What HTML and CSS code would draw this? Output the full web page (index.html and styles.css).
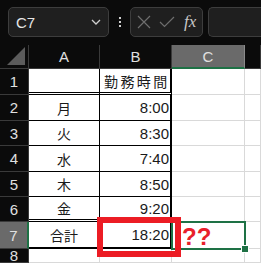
FILE: index.html
```html
<!DOCTYPE html>
<html>
<head>
    <meta charset="UTF-8">
    <title>勤務時間</title>
    <link rel="stylesheet" href="styles.css">
</head>
<body>
    <div class="toolbar">
        <div class="namebox">
            <span class="ref">C7</span>
            <svg class="chev" width="10" height="6" viewBox="0 0 10 6"><path d="M1 1 L5 5 L9 1" fill="none" stroke="#cfcfcf" stroke-width="1.3"/></svg>
        </div>
        <div class="dots"><i></i><i></i><i></i></div>
        <div class="fbtns">
            <svg width="14" height="14" viewBox="0 0 14 14"><path d="M1 1 L13 13 M13 1 L1 13" stroke="#6e6e6e" stroke-width="1.2"/></svg>
            <svg width="16" height="12" viewBox="0 0 16 12"><path d="M1 6 L5.5 10.5 L15 1" fill="none" stroke="#6e6e6e" stroke-width="1.2"/></svg>
            <span class="fx">fx</span>
        </div>
        <div class="formula"></div>
    </div>

    <div class="sheet">
        <div class="grid">
            <div class="corner"><span class="tri"></span></div>
            <div class="colh">A</div>
            <div class="colh">B</div>
            <div class="colh sel">C</div>
            <div class="colh"></div>

            <div class="rowh">1</div>
            <div class="c t a r1"></div>
            <div class="c t b r1 head">勤務時間</div>
            <div class="c"></div>
            <div class="c"></div>

            <div class="rowh">2</div>
            <div class="c t a">月</div>
            <div class="c t b num">8:00</div>
            <div class="c"></div>
            <div class="c"></div>

            <div class="rowh">3</div>
            <div class="c t a">火</div>
            <div class="c t b num">8:30</div>
            <div class="c"></div>
            <div class="c"></div>

            <div class="rowh">4</div>
            <div class="c t a">水</div>
            <div class="c t b num">7:40</div>
            <div class="c"></div>
            <div class="c"></div>

            <div class="rowh">5</div>
            <div class="c t a">木</div>
            <div class="c t b num">8:50</div>
            <div class="c"></div>
            <div class="c"></div>

            <div class="rowh">6</div>
            <div class="c t a r6">金</div>
            <div class="c t b num r6">9:20</div>
            <div class="c"></div>
            <div class="c"></div>

            <div class="rowh sel">7</div>
            <div class="c t a r7">合計</div>
            <div class="c t b num r7">18:20</div>
            <div class="c note">??</div>
            <div class="c"></div>

            <div class="rowh">8</div>
            <div class="c"></div>
            <div class="c"></div>
            <div class="c"></div>
            <div class="c"></div>
        </div>

        <div class="active"><span class="handle"></span></div>
        <div class="mark"></div>
    </div>
</body>
</html>
```

FILE: styles.css
```css
body {
    margin: 0;
    background-color: #0b0b0b;
    font-family: "Liberation Sans", Arial, sans-serif;
    overflow: hidden;
}
.toolbar {
    height: 45px;
    box-sizing: border-box;
    padding: 7px 0 0 8px;
    display: flex;
    align-items: flex-start;
}
.namebox {
    width: 101px;
    height: 30px;
    box-sizing: border-box;
    border: 1px solid #3d3d3d;
    border-radius: 5px;
    background-color: #1f1f1f;
    display: flex;
    align-items: center;
    justify-content: space-between;
    padding: 0 7px 0 7px;
}
.ref {
    color: #e6e6e6;
    font-size: 15px;
}
.dots {
    width: 21px;
    height: 30px;
    display: flex;
    flex-direction: column;
    align-items: center;
    justify-content: center;
    gap: 2px;
}
.dots i {
    width: 2px;
    height: 2px;
    background-color: #d0d0d0;
}
.fbtns {
    width: 73px;
    height: 30px;
    box-sizing: border-box;
    border: 1px solid #3d3d3d;
    border-radius: 5px;
    background-color: #1f1f1f;
    display: flex;
    align-items: center;
    padding: 0 4px 0 6px;
    gap: 8px;
}
.fx {
    font-family: "Liberation Serif", serif;
    font-style: italic;
    font-size: 17px;
    color: #c8c8c8;
    margin-left: 1px;
}
.formula {
    margin-left: 5px;
    flex: 1;
    height: 30px;
    box-sizing: border-box;
    border: 1px solid #3d3d3d;
    border-right: none;
    border-radius: 5px 0 0 5px;
    background-color: #1f1f1f;
}
.sheet {
    position: relative;
}
.grid {
    display: grid;
    grid-template-columns: 29px 71px 72px 73px 16px;
    grid-template-rows: 24px 26px 26px 25px 26px 25px 25px 27px 14px;
}
.grid > div {
    box-sizing: border-box;
}
.corner {
    border-right: 1px solid #3a3a3a;
    border-bottom: 1px solid #3a3a3a;
    position: relative;
}
.tri {
    position: absolute;
    right: 3px;
    bottom: 3px;
    width: 0;
    height: 0;
    border-left: 18px solid transparent;
    border-bottom: 18px solid #5c5c5c;
}
.colh {
    color: #e0e0e0;
    font-size: 15px;
    display: flex;
    align-items: center;
    justify-content: center;
    border-right: 1px solid #3a3a3a;
    border-bottom: 1px solid #3a3a3a;
}
.colh.sel {
    background-color: #6a6a6a;
    border-right-color: #8a8a8a;
    border-bottom: 2px solid #1e7145;
}
.rowh {
    color: #e0e0e0;
    font-size: 15px;
    display: flex;
    align-items: center;
    justify-content: center;
    border-right: 1px solid #3a3a3a;
    border-bottom: 1px solid #3a3a3a;
}
.rowh.sel {
    background-color: #6a6a6a;
    border-right: 2px solid #1e7145;
}
.c {
    background-color: #ffffff;
    border-right: 1px solid #d9d9d9;
    border-bottom: 1px solid #d9d9d9;
    font-size: 14px;
    color: #1a1a1a;
    display: flex;
    align-items: center;
    white-space: nowrap;
}
.c.t {
    border-bottom: 1px solid #000;
}
.c.a {
    justify-content: center;
    border-right: 1px solid #000;
    font-family: "Noto Sans CJK JP", sans-serif;
}
.c.b {
    border-right: 2px solid #000;
}
.c.r1 {
    border-bottom: 3px double #000;
}
.c.r6 {
    border-bottom: 3px double #000;
}
.c.r7 {
    border-bottom: 2px solid #000;
}
.head {
    font-family: "Noto Sans CJK JP", sans-serif;
    letter-spacing: 2.4px;
    padding-left: 4px;
}
.num {
    justify-content: flex-end;
    font-size: 15px;
    padding-right: 1px;
}
.note {
    color: #e8202a;
    font-weight: bold;
    font-size: 24px;
    padding-left: 10px;
    padding-top: 4px;
}
.active {
    position: absolute;
    left: 171px;
    top: 176px;
    width: 75px;
    height: 29px;
    box-sizing: border-box;
    border: 2px solid #1e7145;
}
.handle {
    position: absolute;
    right: -5px;
    bottom: -5px;
    width: 6px;
    height: 6px;
    background-color: #1e7145;
    border: 1px solid #fff;
}
.mark {
    position: absolute;
    left: 97px;
    top: 172px;
    width: 84px;
    height: 40px;
    box-sizing: border-box;
    border: 6px solid #ec1c24;
}
```
